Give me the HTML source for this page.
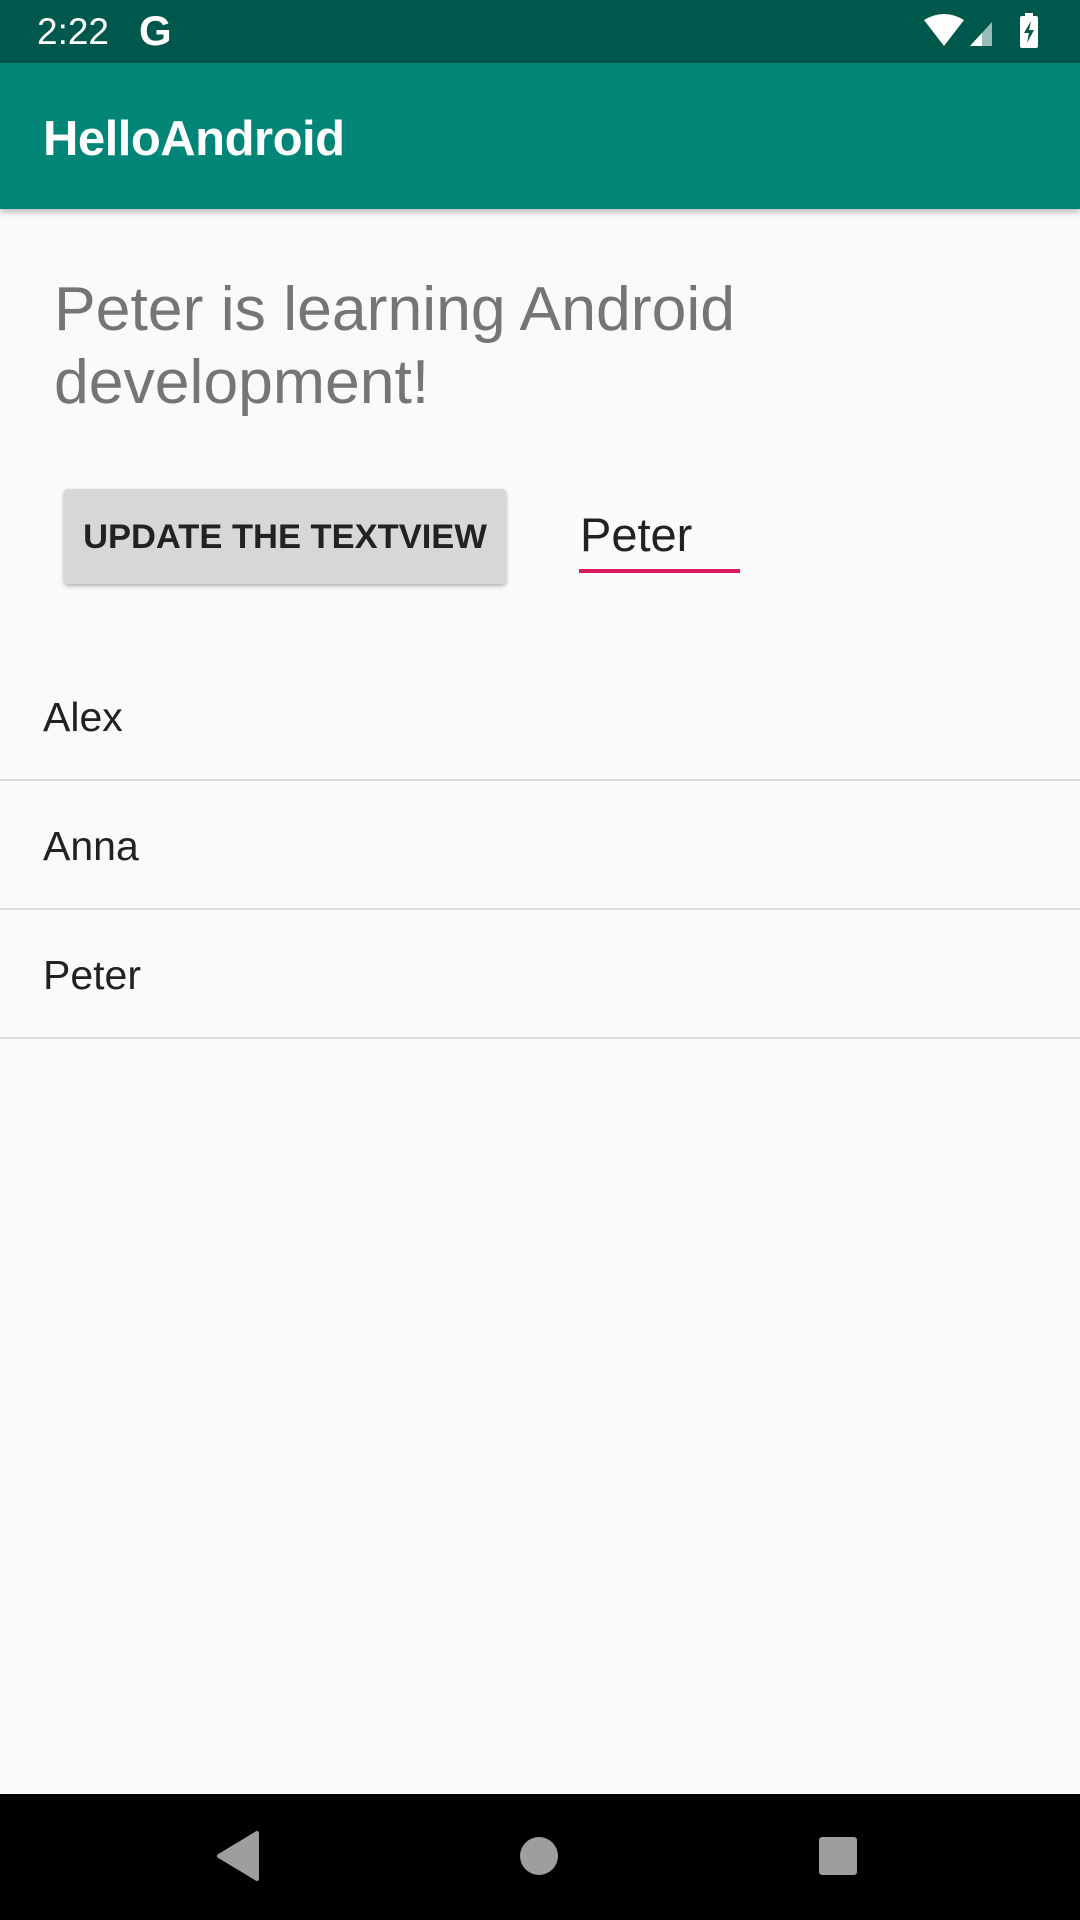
<!DOCTYPE html>
<html><head><meta charset="utf-8"><style>
body{margin:0;width:1080px;height:1920px;background:#fafafa;position:relative;overflow:hidden;font-family:"Liberation Sans",sans-serif}
.a{position:absolute}
</style></head><body>
<div class="a" style="left:0;top:0;width:1080px;height:63px;background:#00574b"></div>
<div class="a" style="left:37px;top:10px;font-size:37px;color:#fff;line-height:44px">2:22</div>
<div class="a" style="left:139px;top:8px;font-size:42px;color:#fff;font-weight:bold;line-height:46px">G</div>
<svg class="a" style="left:920px;top:12px" width="130" height="40" viewBox="0 0 130 40">
<path d="M4 8 Q24 -4 44 8 L24 34 Z" fill="#fff"/>
<path d="M50 34 L72 10 L72 34 Z" fill="#fff" fill-opacity="0.6"/>
<path d="M50 34 L62 21 L62 34 Z" fill="#fff"/>
<rect x="100" y="4" width="18" height="32" rx="2" fill="#fff"/>
<rect x="105" y="1" width="8" height="4" fill="#fff"/>
<path d="M111 9 L104 21 L109 21 L107 31 L114 18 L109 18 Z" fill="#00574b"/>
</svg>
<div class="a" style="left:0;top:63px;width:1080px;height:146px;background:#008577;box-shadow:0 3px 6px rgba(0,0,0,.25)"></div>
<div class="a" style="left:43px;top:106px;font-size:49px;color:#fff;line-height:66px;font-weight:bold;letter-spacing:-0.5px">HelloAndroid</div>
<div class="a" style="left:54px;top:273px;font-size:62.5px;color:#757575;line-height:73px;white-space:nowrap">Peter is learning Android<br>development!</div>
<div class="a" style="left:64px;top:489px;width:442px;height:95px;background:#d6d7d7;border-radius:4px;box-shadow:0 2px 4px rgba(0,0,0,.3)"></div>
<div class="a" style="left:64px;top:490px;width:442px;height:95px;line-height:95px;text-align:center;font-size:34.5px;font-weight:bold;color:#222;white-space:nowrap">UPDATE THE TEXTVIEW</div>
<div class="a" style="left:580px;top:505px;font-size:47px;color:#222;line-height:60px">Peter</div>
<div class="a" style="left:579px;top:569px;width:161px;height:4px;background:#d81b60"></div>
<div class="a" style="left:43px;top:690px;font-size:41px;color:#222;line-height:54px">Alex</div>
<div class="a" style="left:0;top:779px;width:1080px;height:2px;background:#dcdcdc"></div>
<div class="a" style="left:43px;top:819px;font-size:41px;color:#222;line-height:54px">Anna</div>
<div class="a" style="left:0;top:908px;width:1080px;height:2px;background:#dcdcdc"></div>
<div class="a" style="left:43px;top:948px;font-size:41px;color:#222;line-height:54px">Peter</div>
<div class="a" style="left:0;top:1037px;width:1080px;height:2px;background:#dcdcdc"></div>
<div class="a" style="left:0;top:1794px;width:1080px;height:126px;background:#000"></div>
<svg class="a" style="left:0;top:1794px" width="1080" height="126">
<path d="M219 62 L257 39 L257 85 Z" fill="#9e9e9e" stroke="#9e9e9e" stroke-width="4" stroke-linejoin="round"/>
<circle cx="539" cy="62" r="19" fill="#9e9e9e"/>
<rect x="819" y="43" width="38" height="38" rx="3" fill="#9e9e9e"/>
</svg>
</body></html>
